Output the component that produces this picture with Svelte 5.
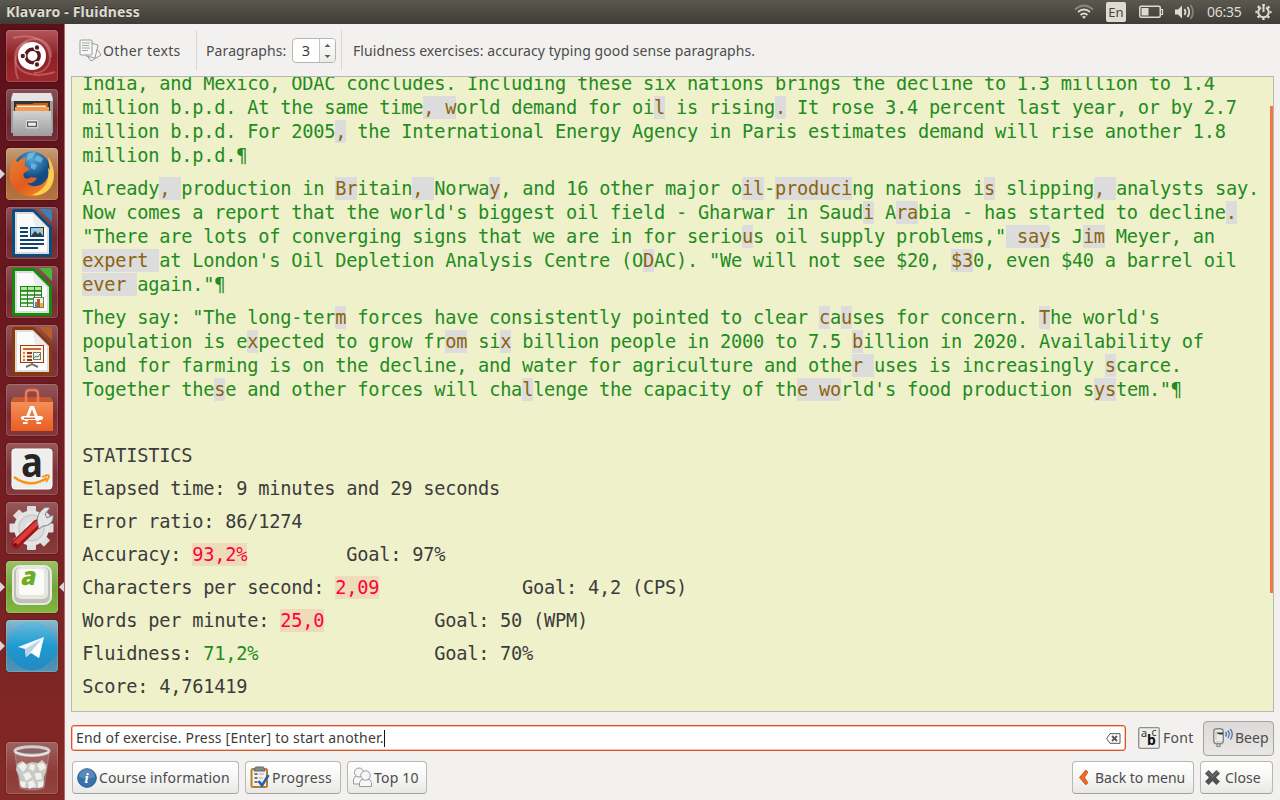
<script>
  const paragraphs = [
    [
      'India, and Mexico, ODAC concludes. Including these six nations brings the decline to 1.3 million to 1.4',
      'million b.p.d. At the same time|, w|orld demand for oi|l| is rising|.| It rose 3.4 percent last year, or by 2.7',
      'million b.p.d. For 2005|,| the International Energy Agency in Paris estimates demand will rise another 1.8',
      'million b.p.d.¶'
    ],
    [
      'Already|, |production in |Br|itain|, |Norwa|y|, and 16 other major o|il|-|produci|ng nations i|s| slipping|, |analysts say.',
      "Now comes a report that the world's biggest oil field - Gharwar in Saud|i| A|ra|bia - has started to decline|.|",
      '"There are lots of converging signs that we are in for serio|u|s oil supply problems,"| say|s J|im| Meyer, an',
      '|expert |at London\'s Oil Depletion Analysis Centre (O|D|AC). "We will not see $20, |$3|0, even $40 a barrel oil',
      '|ever |again."¶'
    ],
    [
      'They say: "The long-ter|m| forces have consistently pointed to clear |c|a|u|ses for concern. |T|he world\'s',
      'population is e|x|pected to grow fr|om| si|x| billion people in 2000 to 7.5 |b|illion in 2020. Availability of',
      'land for farming is on the decline, and water for agriculture and othe|r |uses is increasingly |s|carce.',
      'Together the|s|e and other forces will cha|l|lenge the capacity of th|e wo|rld\'s food production s|ys|tem."¶'
    ]
  ];

  const stats = [
    { label: 'STATISTICS' },
    { label: 'Elapsed time: 9 minutes and 29 seconds' },
    { label: 'Error ratio: 86/1274' },
    { label: 'Accuracy: ', value: '93,2%', kind: 'low', goal: 'Goal: 97%', column: 24 },
    { label: 'Characters per second: ', value: '2,09', kind: 'low', goal: 'Goal: 4,2 (CPS)', column: 40 },
    { label: 'Words per minute: ', value: '25,0', kind: 'low', goal: 'Goal: 50 (WPM)', column: 32 },
    { label: 'Fluidness: ', value: '71,2%', kind: 'met', goal: 'Goal: 70%', column: 32 },
    { label: 'Score: 4,761419' }
  ];

  const gap = (s) => ' '.repeat(s.column - s.label.length - s.value.length);

  const launchers = [
    { id: 'dash' }, { id: 'files' }, { id: 'firefox', running: true }, { id: 'writer' },
    { id: 'calc' }, { id: 'impress' }, { id: 'software' }, { id: 'amazon' },
    { id: 'settings' }, { id: 'klavaro', running: true, active: true }, { id: 'telegram', running: true }
  ];
</script>

{#snippet doc(dark, light)}
  <path d="M8 2h20l18 18v27q0 3-3 3H9q-3 0-3-3V5q0-3 2-3z" fill={dark} />
  <path d="M9 5h18l16 16v26H9z" fill="#dcdcdc" />
  <path d="M11 7h16l14 14v24H11z" fill="#fbfbfb" />
  <path d="M27 7l14 14H31q-4-4-4-14z" fill="#ececec" />
  <path d="M33 2h11q2 0 2 2v11z" fill={light} />
{/snippet}

{#snippet appIcon(id)}
  <svg width="52" height="52" viewBox="0 0 52 52">
    {#if id === 'dash'}
      <g fill="none" stroke="#e3a3a3" stroke-opacity=".4" stroke-width="2">
        <path d="M12 49C5 30 13 9 29 9c11 0 16 9 16 18" />
        <path d="M7 8c21-6 37 4 37 20 0 9-7 15-16 15" />
        <path d="M49 42c-18 6-40 3-40-15 0-8 6-14 12-15" />
      </g>
      <circle cx="26" cy="26" r="14" fill="#fff" />
      <circle cx="26.500" cy="26" r="6.700" fill="none" stroke="#5a1a22" stroke-width="3.400" />
      <g fill="#5a1a22" stroke="#fff" stroke-width="1.200"><circle cx="16.800" cy="26" r="2.800" /><circle cx="31" cy="17.500" r="2.800" /><circle cx="31" cy="34.500" r="2.800" /></g>
    {:else if id === 'files'}
      <path d="M7 4h38l2 4v36H5V8z" fill="#9c9c9c" />
      <path d="M7 4h38l2 8H5z" fill="#e4e4e4" />
      <path d="M8 12h36v13H8z" fill="#38332f" />
      <path d="M10 15h16l2-1h14v8H10z" fill="#c95f16" />
      <path d="M9 18h34v5H9z" fill="#f29a50" /><path d="M11 16.500h29v1.500H11z" fill="#f7ead8" />
      <path d="M7 22h38l1 25H7z" fill="url(#steel)" />
      <rect x="19.500" y="30.500" width="13" height="9" rx="2" fill="#e8e8e8" stroke="#bbb" />
      <rect x="21.500" y="33" width="9" height="4.500" fill="#eee" stroke="#555" stroke-width="1.300" />
    {:else if id === 'firefox'}
      <circle cx="26" cy="22" r="18.500" fill="url(#globe)" />
      <path d="M22 5l8-1-4 6-6 3zM31 7l6 3-2 5-6-3zM25 15l6 2-2 5-4-2z" fill="#8acbea" opacity=".6" />
      <path d="M9 9C3 17 1 34 9 41c9 10 27 10 35-1 6-8 5-22-2-31l1 6c2 9-1 17-7 21-5 3-12 3-15-1 4 1 8-1 10-5l-6-1c-5 4-9 0-7-4l6-4-5-3c-1-3 1-6 0-9-3 1-6 3-7 5-2-1-3-2-3-5z" fill="url(#fox)" />
      <path d="M42 9c7 9 8 23 2 31-5 6-11 8-18 7 12-5 18-13 16-27l2 2z" fill="#ffdc58" opacity=".85" />
    {:else if id === 'writer'}
      {@render doc('#0a4e80', '#3a82b4')}
      <path d="M14 21h8m-8 4h8m-8 4h8M14 33h24M14 37h24M14 41h18" stroke="#10456b" stroke-width="2" />
      <rect x="24.500" y="20.500" width="13" height="9" fill="#96c8eb" stroke="#124267" /><path d="M25 29l4-5 3 3 2-2 3 4z" fill="#343c42" /><path d="M33 21h4v4z" fill="#e9c337" />
    {:else if id === 'calc'}
      {@render doc('#168a0a', '#4cb83b')}
      <rect x="14" y="20" width="22" height="21" fill="#228514" />
      <path d="M15 22.500h20" stroke="#b4e59f" stroke-width="3" stroke-dasharray="6 1" />
      <path d="M15 27h20M15 31h20M15 35h20M15 39h20" stroke="#edf8e9" stroke-width="2.700" stroke-dasharray="6 1" />
      <rect x="27.500" y="31.500" width="10" height="10" fill="#eee" stroke="#777" /><path d="M29 36h2v5h-2z" fill="#3598cf" /><path d="M31 33h3v8h-3z" fill="#c95420" /><path d="M34 37h3v4h-3z" fill="#eeb421" />
    {:else if id === 'impress'}
      {@render doc('#8b3909', '#b95f26')}
      <rect x="14.500" y="20.500" width="23" height="17" fill="#fff3e8" stroke="#974018" />
      <path d="M17 24h18" stroke="#d56525" stroke-width="2" />
      <path d="M17 28h2m-2 3.500h2m-2 3.500h2" stroke="#e07a35" stroke-width="2" /><path d="M21 28h5m-5 3.500h5m-5 3.500h5" stroke="#8b3d17" stroke-width="2" />
      <rect x="27.500" y="27.500" width="7" height="7" fill="#eee" stroke="#777" /><path d="M28 33l2-2 2 1 2-3" stroke="#269b35" fill="none" />
      <path d="M26 38v2m-6 2l6-3 6 3" stroke="#777" stroke-width="2" fill="none" />
    {:else if id === 'software'}
      <path d="M8 13h36l3 5v29H5V18z" fill="url(#bag)" /><path d="M5 18l3-5h36l3 5z" fill="#c65a2d" />
      <path d="M20 18v-8q0-4 4-4h4q4 0 4 4v8" fill="none" stroke="#ed7b51" stroke-width="2.600" />
      <path d="M20 37l5-13.500h2L32 37" fill="none" stroke="#fff" stroke-width="3" stroke-linejoin="round" />
      <path d="M17 34h18" stroke="#fff" stroke-width="4" stroke-linecap="round" /><path d="M18 34.300h11" stroke="#ee6526" stroke-width="1.500" />
      <path d="M17 39h4.500m9 0H35" stroke="#fff" stroke-width="2" />
    {:else if id === 'amazon'}
      <rect x="6" y="6" width="40" height="40" rx="3" fill="#eeeeee" stroke="#fff" />
      <text x="15" y="33.500" font-size="41" font-weight="700" font-family="Open Sans, sans-serif" fill="#252525" textLength="22" lengthAdjust="spacingAndGlyphs">a</text>
      <path d="M8 34q16 12 33 1" fill="none" stroke="#f79515" stroke-width="2.500" /><path d="M36 34q7-3 7-1t-3 6" fill="none" stroke="#f79515" stroke-width="1.800" />
    {:else if id === 'settings'}
      <g transform="translate(25.500 26)">
        {#each [0, 45, 90, 135] as a}<rect x="-4.500" y="-22" width="9" height="44" rx="1" fill="#dedede" transform={`rotate(${a})`} />{/each}
        <circle r="17.500" fill="#e5e5e5" /><circle r="13.500" fill="#cacaca" /><circle r="12" fill="#dcdcdc" /><circle r="6" fill="#eee" />
      </g>
      <path d="M10 42l21-20" stroke="#9e1415" stroke-width="9" stroke-linecap="round" /><path d="M10 41l20-19" stroke="#d93c3c" stroke-width="5" stroke-linecap="round" />
      <path d="M32 23c-2-6 0-12 5-16 2-2 4-2 7-1l-5 6 2 4 6-3c1 7-4 11-10 11l-4 3z" fill="#e3e6e6" stroke="#7d8383" />
      <circle cx="9.500" cy="42.500" r="1.600" fill="#5d0d0d" />
    {:else if id === 'klavaro'}
      <rect x="7" y="5" width="38" height="38" rx="7" fill="#bfc0b8" stroke="#e9e9e3" stroke-width="2" /><rect x="10" y="6" width="32" height="32" rx="5" fill="#e6e7e1" /><rect x="13" y="8" width="25" height="26" rx="3" fill="#fafaf7" />
      <text x="19" y="23.500" transform="skewX(-12)" font-size="25" font-weight="800" font-family="Open Sans, sans-serif" fill="#6cad25" textLength="15" lengthAdjust="spacingAndGlyphs">a</text>
    {:else if id === 'telegram'}
      <circle cx="26" cy="26" r="24" fill="url(#tele)" /><path d="M12 27l26-10-5 21-8-5-5 4-1-8z" fill="#f5faff" /><path d="M19 29l17-10-11 13-5 5z" fill="#bdd3e5" /><path d="M25 32l11-13-3 19z" fill="#fff" />
    {:else if id === 'trash'}
      <path d="M9 12l5 34q12 4 24 0l5-34z" fill="#d8c4c4" fill-opacity=".22" stroke="#b5a2a2" stroke-opacity=".55" />
      <path d="M11 22l5-3 4 3 6-2 6 1 4-3 5 5-1 7-2 5v8q-4 4-12 3-9 1-12-3l-1-9-3-6z" fill="#c9c9c6" />
      <path d="M12 24l6-4 3 5-4 5zM24 22l5 1-1 6-5-2zM31 22l6-1 3 5-6 3zM17 32l6-2 3 5-6 4zM29 31l6 0 1 6-6 1zM14 39l6 1-1 6-4-1zM22 40l5-2 3 6-7 3zM32 40l5-1 0 6-5 1z" fill="#f0f0ed" />
      <ellipse cx="26" cy="9" rx="17" ry="4.200" fill="#8e6363" stroke="#cfcfcf" stroke-width="3" /><path d="M9 10q17 8 34 0" stroke="#f3f3f3" fill="none" />
    {/if}
  </svg>
{/snippet}

<svg class="defs" width="0" height="0"><defs>
  <linearGradient id="steel" x2="0" y2="1"><stop stop-color="#d2d2d2" /><stop offset="1" stop-color="#9d9d9d" /></linearGradient>
  <linearGradient id="bag" x2="0" y2="1"><stop stop-color="#f39a64" /><stop offset="1" stop-color="#eb5d20" /></linearGradient>
  <linearGradient id="fox" x2="1" y2="1"><stop stop-color="#e78330" /><stop offset=".5" stop-color="#e25b20" /><stop offset="1" stop-color="#f29a25" /></linearGradient>
  <linearGradient id="tele" x2="0" y2="1"><stop stop-color="#68b9dc" /><stop offset=".5" stop-color="#1d9bd2" /><stop offset="1" stop-color="#2289c1" /></linearGradient>
  <radialGradient id="globe" cy=".2"><stop stop-color="#4fa9d8" /><stop offset="1" stop-color="#144b85" /></radialGradient>
</defs></svg>

<div class="screen">
  <header class="panel">
    <strong>Klavaro - Fluidness</strong>
    <div class="indicators">
      <svg width="20" height="16" viewBox="0 0 20 16" fill="none" stroke="#dfdbd2" stroke-width="1.800"><path d="M1 5.500q9-8 18 0" stroke="#8a877f" /><path d="M4 8q6-5 12 0M6.500 11q3.500-3 7 0" /><path d="M8 12.500l2 2.500 2-2.500q-2-1-4 0z" fill="#dfdbd2" stroke="none" /></svg>
      <span class="lang">En</span>
      <svg width="25" height="14" viewBox="0 0 25 14"><rect x=".75" y="1.250" width="20.500" height="11" rx="1.500" fill="none" stroke="#dfdbd2" stroke-width="1.500" /><path d="M22 4.500h1.500v5H22" fill="none" stroke="#dfdbd2" stroke-width="1.200" /><rect x="2.500" y="3" width="7" height="7.500" fill="#dfdbd2" /></svg>
      <svg class="vol" width="20" height="18" viewBox="0 0 20 18"><path d="M0 6.500h3l4-4v13l-4-4H0z" fill="#dfdbd2" /><g fill="none" stroke="#dfdbd2" stroke-width="1.800"><path d="M9.500 6q2 3 0 6" /><path d="M12.500 4q3.500 5 0 10" /><path d="M15.500 2q5 7 0 14" stroke="#85827a" /></g></svg>
      <span class="clock">06:35</span>
      <svg width="17" height="18" viewBox="0 0 17 18" fill="none" stroke="#dfdbd2"><path d="M6 4.500a5.200 5.200 0 1 0 5 0" stroke-width="2" /><path d="M8.500 1v8" stroke-width="2" /><circle cx="8.500" cy="9" r="7.100" stroke-width="2" stroke-dasharray="2.400 3.176" stroke-dashoffset="1.200" /></svg>
    </div>
  </header>

  <div class="below">
    <nav class="launcher">
      {#each launchers as l}
        <div class="tile {l.id}">
          {@render appIcon(l.id)}
          {#if l.running}<i class="run"></i>{/if}
          {#if l.active}<i class="act"></i>{/if}
        </div>
      {/each}
      <div class="tile trash">{@render appIcon('trash')}</div>
    </nav>

    <main>
      <div class="toolbar">
        <div class="tool other">
          <svg width="23" height="23" viewBox="0 0 23 23"><g stroke="#999" fill="#f7f7f7"><path d="M16 7l6 9-10 6-5-7z" /><path d="M12 4l7 2-3 13-9-2z" /><rect x="1" y="1" width="12" height="15" rx="1" /></g><path d="M3 4h8M3 6.500h7M3 9h8M3 11.500h6" stroke="#9baa9b" /></svg>
          <span class="w-other">Other texts</span>
        </div>
        <div class="tool paras">
          <span class="w-paras">Paragraphs:</span>
          <div class="spin"><span>3</span><div class="arrows"><svg width="7" height="16" viewBox="0 0 7 16"><path d="M.5 4L3.500 1l3 3zM.5 12l3 3 3-3z" fill="#5c5c5c" /></svg></div></div>
        </div>
        <div class="tool hint"><span class="w-hint">Fluidness exercises: accuracy typing good sense paragraphs.</span></div>
      </div>

      <section class="paper">
        <div class="text">
          {#each paragraphs as p}
            <div class="para">
              {#each p as line}
                <div class="line">{#each line.split('|') as part, i}{#if i % 2}<span class="miss">{part}</span>{:else}{part}{/if}{/each}</div>
              {/each}
            </div>
          {/each}
          <div class="para"><div class="line"></div></div>
          {#each stats as s}
            <div class="para stat"><div class="line">{s.label}{#if s.value}<span class={s.kind}>{s.value}</span>{gap(s)}{s.goal}{/if}</div></div>
          {/each}
        </div>
        <div class="scroll"></div>
      </section>

      <div class="entry-row">
        <div class="entry">
          <span class="w-entry">End of exercise. Press [Enter] to start another.</span><i class="caret"></i>
          <svg width="15" height="11" viewBox="0 0 15 11" fill="none" stroke="#555"><path d="M4 .7h10v9.600H4L.7 5.500z" /><path d="M6 3l5 5m0-5L6 8" stroke-width="1.800" /></svg>
        </div>
        <div class="fontbtn">
          <svg width="22" height="22" viewBox="0 0 22 22"><rect x=".7" y=".7" width="20.600" height="20.600" rx="1.500" fill="#ededeb" stroke="#8e8e8e" stroke-width="1.300" /><g font-family="Noto Sans, sans-serif" fill="#333"><text x="3" y="9.500" font-size="11">a</text><text x="13.500" y="9" font-size="10.500">c</text><text x="9" y="18" font-size="14" font-weight="700" fill="#111">b</text></g></svg>
          <span class="w-font">Font</span>
        </div>
        <div class="btn beep">
          <svg width="22" height="22" viewBox="0 0 22 22"><rect x="1.700" y="1.700" width="9.600" height="15" rx="3" fill="#ececea" stroke="#888" stroke-width="1.400" /><path d="M5 5.500h6v2H8l-3-1z" fill="#333" /><path d="M4 4v9" stroke="#bbb" /><path d="M4 14h5v1.500H4z" fill="#ccc" /><path d="M5 17v2.500h3V17" fill="none" stroke="#888" stroke-width="1.200" /><g fill="none" stroke="#4977ae" stroke-width="1.300"><path d="M13.500 5q2 2.200 0 4.500" /><path d="M15.800 3.500q3 3.700 0 7.500" /><path d="M18.300 2q4 5.200 0 10.500" /></g></svg>
          <span class="w-beep">Beep</span>
        </div>
      </div>

      <div class="buttons">
        <div class="btn course">
          <svg width="20" height="20" viewBox="0 0 20 20"><circle cx="10" cy="10" r="9.300" fill="#3672ab" stroke="#285c91" /><path d="M2 9a8 8 0 0 1 16 0q-8 3-16 0z" fill="#fff" opacity=".17" /><text x="7.600" y="15" font-size="15" font-family="Liberation Serif, serif" font-style="italic" font-weight="700" fill="#fff">i</text></svg>
          <span class="w-course">Course information</span>
        </div>
        <div class="btn progress">
          <svg width="20" height="23" viewBox="0 0 20 23"><rect x="1.500" y="3" width="15.500" height="18" rx="1.500" fill="#f2f2f0" stroke="#b57f2f" stroke-width="2" /><path d="M5.500 1h8l1.500 4H4z" fill="#888" stroke="#666" /><path d="M4.500 8h3m-3 4h3m-3 4h3" stroke="#777" stroke-width="2" /><path d="M9 8h5m-5 4h4m-4 4h3" stroke="#aaa" /><path d="M8.500 15l3.500 4.500L18.500 9" fill="none" stroke="#2b60a8" stroke-width="2.600" /></svg>
          <span class="w-progress">Progress</span>
        </div>
        <div class="btn top">
          <svg width="20" height="21" viewBox="0 0 20 21" fill="#f7f7f7" stroke="#999"><path d="M1.500 17v-5l2-3h7v8z" /><circle cx="7" cy="5.500" r="4.500" /><path d="M7.500 19.500v-4l2-3h8l2 3v4z" /><circle cx="13.500" cy="8.500" r="4.700" /></svg>
          <span class="w-top">Top 10</span>
        </div>
        <div class="spacer"></div>
        <div class="btn back">
          <svg width="11" height="17" viewBox="0 0 11 17"><path d="M7.800 1.200L1.500 8.500l6.300 7.300 2-2L6.500 8.500 9.800 3z" fill="#ea6b2a" stroke="#cc4e16" stroke-linejoin="round" /></svg>
          <span class="w-back">Back to menu</span>
        </div>
        <div class="btn close">
          <svg width="17" height="17" viewBox="0 0 17 17"><path d="M2.800 2.800l11.400 11.400m0-11.400L2.800 14.200" stroke="#4f5252" stroke-width="5" /><path d="M3 2.500l5.500 5.300L14 2.500" stroke="#6c6f6f" stroke-width="1.500" fill="none" /></svg>
          <span class="w-close">Close</span>
        </div>
      </div>
    </main>
  </div>
</div>

<style>
  :global(body) { background: #f2f1ef; overflow: hidden; }
  * { box-sizing: border-box; }
  svg { display: block; flex: none; overflow: visible; }
  .defs { position: absolute; }
  .screen { width: 1280px; height: 800px; display: flex; flex-direction: column; font: 14px/20px "Noto Sans", "Open Sans", sans-serif; color: #4c4c4c; white-space: nowrap; background: #f2f1ef; }
  .panel { height: 24px; flex: none; display: flex; align-items: center; justify-content: space-between; padding: 0 8px 0 6px; background: linear-gradient(#5b584f, #3d3c37); color: #dfdbd2; }
  .panel strong { font-size: 14px; letter-spacing: .2px; text-shadow: 0 -1px #2b2a27; }
  .indicators { display: flex; align-items: center; }
  .lang { width: 20px; height: 20px; margin: 0 13px 0 12px; border-radius: 2px; background: #dfdbd2; color: #45433e; font-size: 13px; text-align: center; }
  .vol { margin: 0 12px 0 11px; }
  .clock { width: 37px; margin-right: 11px; letter-spacing: -.25px; }
  .below { flex: 1; display: flex; min-height: 0; }
  .launcher { width: 65px; flex: none; display: flex; flex-direction: column; gap: 7px; padding: 6px 0 6px 6px; background: linear-gradient(#5c101a, #721d22 55%, #842a26); border-right: 1px solid #b06a64; }
  .tile { position: relative; width: 52px; height: 52px; flex: none; border-radius: 4px; background: linear-gradient(rgba(255,255,255,.26), rgba(255,255,255,.08) 60%, rgba(255,255,255,.12)); box-shadow: inset 0 0 0 1px rgba(255,255,255,.15), 0 0 2px rgba(0,0,0,.45); }
  .tile.dash { background: linear-gradient(#b45559, #8c2026 50%, #a02a2d); }
  .tile.firefox { background: linear-gradient(#c79d78, #a9673a 55%, #b87441); }
  .tile.klavaro { background: linear-gradient(#9ac167, #70a335 55%, #82b840); }
  .tile.telegram { background: linear-gradient(#8cbad0, #3989b1 55%, #5294b5); }
  .tile.trash { margin-top: auto; }
  .run { position: absolute; left: -6px; top: 21px; border: 5px solid transparent; border-left-color: #ddd5d5; border-right: 0; }
  .act { position: absolute; right: -6px; top: 21px; border: 5px solid transparent; border-right-color: #ddd5d5; border-left: 0; }
  main { flex: 1; min-width: 0; display: flex; flex-direction: column; padding: 0 6px 7px; }
  .toolbar { height: 52px; flex: none; display: flex; align-items: center; }
  .tool { display: flex; align-items: center; height: 40px; padding-top: 1px; }
  .other { width: 125px; padding-left: 8px; gap: 1px; }
  .w-other { letter-spacing: .35px; }
  .paras { width: 145px; padding-left: 9px; border-left: 1px solid #d8d7d5; justify-content: space-between; padding-right: 5px; }
  .w-paras { letter-spacing: .1px; }
  .hint { padding-left: 11px; border-left: 1px solid #d8d7d5; }
  .w-hint { letter-spacing: .08px; }
  .w-entry { letter-spacing: .2px; }
  .w-font { letter-spacing: .3px; }
  .w-course { letter-spacing: .15px; }
  .w-progress { letter-spacing: .25px; }
  .w-top { letter-spacing: .2px; }
  .spin { width: 44px; height: 25px; display: flex; background: #fff; border: 1px solid #b8b5b1; border-radius: 4px; overflow: hidden; line-height: 23px; color: #3c3c3c; }
  .spin span { flex: 1; text-align: center; font-size: 14.500px; }
  .arrows { width: 16px; border-left: 1px solid #c8c5c1; background: linear-gradient(#fff, #ebebea); display: grid; place-items: center; }
  .paper { height: 636px; flex: none; width: 1203px; display: flex; overflow: hidden; border: 1px solid #b9b7b2; background: #eff1ca; }
  .text { flex: 1; margin-top: -5px; padding-left: 10.300px; font: 18.670px/24px "DejaVu Sans Mono", monospace; letter-spacing: -.237px; color: #228b22; }
  .para { margin-bottom: 9px; display: flex; flex-direction: column; }
  .line { height: 24px; white-space: pre; }
  .stat { color: #3c3c3c; }
  .miss { background: #dcdcdc; color: #8b6508; padding: 1px 0; }
  .low { background: #eedcb8; color: #ff0040; padding: 1px 0; }
  .met { color: #228b22; }
  .scroll { width: 3px; height: 487px; margin-top: 29px; background: #f07746; }
  .entry-row { display: flex; align-items: center; height: 34px; margin-top: 9px; }
  .entry { width: 1055px; height: 26px; display: flex; align-items: center; padding: 0 4px; border: 1px solid #d95427; box-shadow: inset 0 0 0 .5px #e28662; border-radius: 3px; background: #fff; color: #3c3c3c; }
  .entry svg { margin-left: auto; }
  .caret { width: 1px; height: 17px; background: #111; }
  .fontbtn { width: 77px; padding-left: 12px; display: flex; align-items: center; gap: 3px; }
  .btn { height: 33px; display: flex; align-items: center; border: 1px solid #b9b7b4; border-bottom-color: #a5a3a0; border-radius: 4px; background: linear-gradient(#fff, #f6f6f5 50%, #e8e8e7); }
  .beep { width: 71px; height: 35px; padding-left: 8px; gap: 1px; background: linear-gradient(#dcdbd9, #e8e7e5); border-color: #a5a29f; }
  .buttons { display: flex; gap: 6px; margin-top: 6px; width: 1202px; }
  .spacer { flex: 1; }
  .course { width: 167px; padding-left: 4px; gap: 2px; margin-left: 1px; }
  .progress { width: 96px; padding-left: 4px; gap: 2px; }
  .top { width: 80px; padding-left: 4px; gap: 2px; }
  .back { width: 122px; padding-left: 5px; gap: 6px; }
  .close { width: 73px; padding-left: 3px; gap: 4px; }
</style>
